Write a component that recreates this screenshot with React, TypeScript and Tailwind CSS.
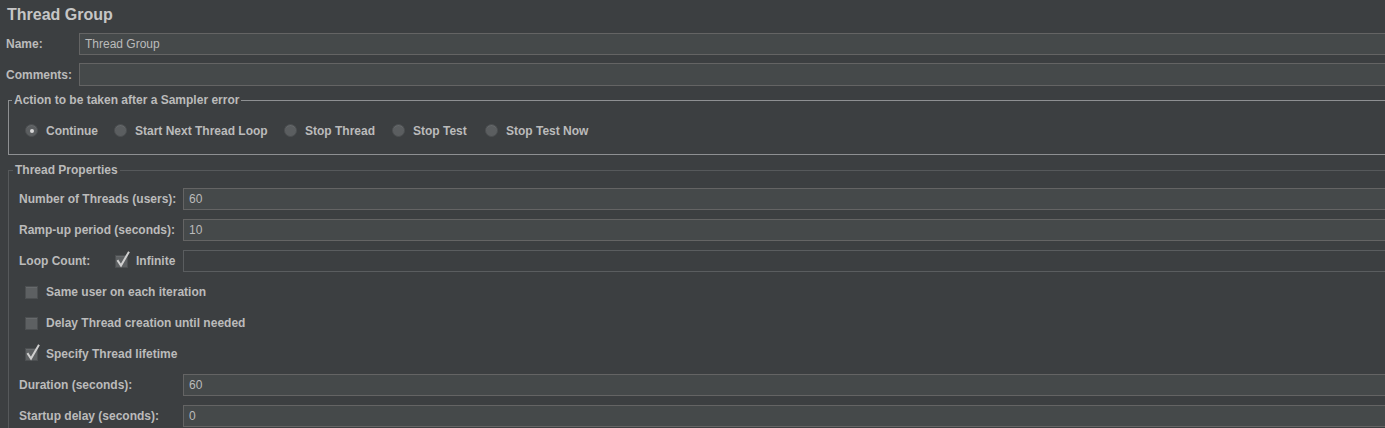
import React from "react";

const Radio = ({ checked }: { checked?: boolean }) => (
  <span className="w-[13px] h-[13px] shrink-0 rounded-full border border-[#4c4f51] bg-[#5b5e60] flex items-center justify-center shadow-[inset_0_1px_0_#66696b]">
    {checked && <span className="w-[4px] h-[4px] rounded-full bg-[#d8d8d8]" />}
  </span>
);

const Checkbox = ({ checked }: { checked?: boolean }) => (
  <span className="relative w-[13px] h-[13px] shrink-0 border border-[#4c4f51] bg-[#5d6062] shadow-[inset_0_1px_0_#676a6c]">
    {checked && (
      <svg
        width="15"
        height="17"
        viewBox="0 0 15 17"
        className="absolute left-[0px] top-[-5px] overflow-visible"
      >
        <path
          d="M2 10 L5 14.5 L12.5 1.5"
          fill="none"
          stroke="#cfcfcf"
          strokeWidth="2"
          strokeLinecap="square"
        />
      </svg>
    )}
  </span>
);

const Field = ({ value, disabled }: { value?: string; disabled?: boolean }) => (
  <div
    className={
      disabled
        ? "flex-1 h-full border border-[#5a5d5f] bg-[#3c3f41] pl-[5px] flex items-center"
        : "flex-1 h-full border border-[#646464] bg-[#45494a] pl-[5px] flex items-center"
    }
  >
    <span className="text-[12px] font-normal text-[#bbbbbb]">{value}</span>
  </div>
);

const PropRow = ({ label, value }: { label: string; value: string }) => (
  <div className="h-[22px] flex items-center">
    <span className="w-[164px] shrink-0 text-[12px] font-bold">{label}</span>
    <Field value={value} />
  </div>
);

const CheckRow = ({ label, checked }: { label: string; checked?: boolean }) => (
  <div className="h-[22px] flex items-center pl-[6px]">
    <Checkbox checked={checked} />
    <span className="ml-[8px] text-[12px] font-bold">{label}</span>
  </div>
);

// radio items keep the spacing of the swing layout
const actions = [
  { label: "Continue", w: "w-[89px]" },
  { label: "Start Next Thread Loop", w: "w-[170px]" },
  { label: "Stop Thread", w: "w-[108px]" },
  { label: "Stop Test", w: "w-[93px]" },
  { label: "Stop Test Now", w: "w-[120px]" },
];

export default function App() {
  return (
    <div className="w-[1385px] h-[428px] overflow-hidden bg-[#3c3f41] text-[#bbbbbb] font-['Liberation_Sans',Arial,sans-serif]">
      <div className="w-[1420px]">
        <div className="pl-[7px] pt-[5px] h-[26px] text-[16px] leading-[20px] font-bold text-[#c6c6c6]">
          Thread Group
        </div>

        <div className="mt-[7px] h-[22px] flex items-center">
          <span className="w-[79px] shrink-0 pl-[6px] text-[12px] font-bold">Name:</span>
          <Field value="Thread Group" />
        </div>
        <div className="mt-[8px] h-[23px] flex items-center">
          <span className="w-[79px] shrink-0 pl-[6px] text-[12px] font-bold">Comments:</span>
          <Field />
        </div>

        <fieldset className="mt-[7px] ml-[8px] border border-[#8e9092]">
          <legend className="ml-[3px] px-[2px] text-[12px] leading-[14px] font-bold">
            Action to be taken after a Sampler error
          </legend>
          <div className="pl-[16px] h-[47px] flex items-center">
            {actions.map((a, i) => (
              <div key={a.label} className={`${a.w} shrink-0 flex items-center`}>
                <Radio checked={i === 0} />
                <span className="ml-[8px] text-[12px] font-bold">{a.label}</span>
              </div>
            ))}
          </div>
        </fieldset>

        <fieldset className="mt-[8px] ml-[8px] border border-[#56595b]">
          <legend className="ml-[4px] px-[2px] text-[12px] leading-[14px] font-bold">
            Thread Properties
          </legend>
          <div className="pl-[10px] pt-[11px] pb-[12px] flex flex-col gap-[9px]">
            <PropRow label="Number of Threads (users):" value="60" />
            <PropRow label="Ramp-up period (seconds):" value="10" />
            <div className="h-[22px] flex items-center">
              <div className="w-[164px] shrink-0 flex items-center">
                <span className="w-[96px] text-[12px] font-bold">Loop Count:</span>
                <Checkbox checked />
                <span className="ml-[8px] text-[12px] font-bold">Infinite</span>
              </div>
              <Field disabled />
            </div>
            <CheckRow label="Same user on each iteration" />
            <CheckRow label="Delay Thread creation until needed" />
            <CheckRow label="Specify Thread lifetime" checked />
            <PropRow label="Duration (seconds):" value="60" />
            <PropRow label="Startup delay (seconds):" value="0" />
          </div>
        </fieldset>
      </div>
    </div>
  );
}
